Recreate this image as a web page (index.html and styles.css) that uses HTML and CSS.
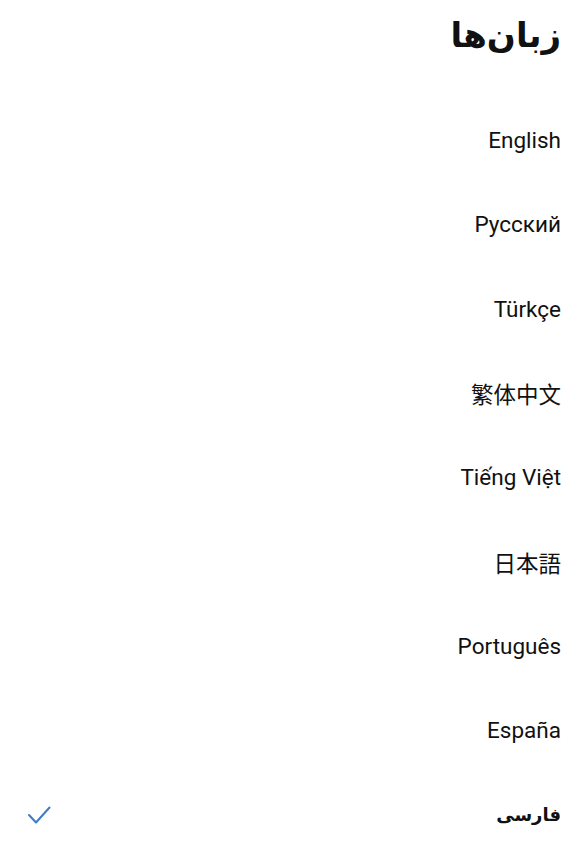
FILE: index.html
```html
<!DOCTYPE html>
<html lang="fa" dir="rtl">
<head>
    <meta charset="UTF-8">
    <title>زبان‌ها</title>
    <link rel="stylesheet" href="styles.css">
</head>
<body>

<div class="page">
    <h1 class="title">زبان‌ها</h1>

    <ul class="lang-list">
        <li class="lang-item" lang="en" dir="ltr">English</li>
        <li class="lang-item" lang="ru" dir="ltr">Русский</li>
        <li class="lang-item" lang="tr" dir="ltr">Türkçe</li>
        <li class="lang-item" lang="zh-Hant" dir="ltr">繁体中文</li>
        <li class="lang-item" lang="vi" dir="ltr">Tiếng Việt</li>
        <li class="lang-item" lang="ja" dir="ltr">日本語</li>
        <li class="lang-item" lang="pt" dir="ltr">Português</li>
        <li class="lang-item" lang="es" dir="ltr">España</li>
        <li class="lang-item active">
            <span class="lang-name">فارسی</span>
            <svg class="check" width="24" height="20" viewBox="0 0 24 20">
                <path d="M2 10 L9 17.5 L22.5 2.5" fill="none" stroke="#3b7cc4" stroke-width="2" stroke-linecap="round" stroke-linejoin="round"/>
            </svg>
        </li>
    </ul>
</div>

</body>
</html>
```

FILE: styles.css
```css
body {
    margin: 0;
    background: #ffffff;
    color: #111111;
    font-family: Roboto, "DejaVu Sans", "Noto Sans CJK SC", sans-serif;
}

.page {
    padding: 0 26px 0 27px;
}

.title {
    margin: 0;
    font-size: 34px;
    line-height: 70px;
    font-weight: bold;
    text-align: right;
    direction: rtl;
}

.lang-list {
    list-style: none;
    margin: 0;
    padding: 28px 0 0 0;
}

.lang-item {
    display: flex;
    align-items: center;
    justify-content: flex-end;
    height: 84.3px;
    font-size: 22.5px;
}

.lang-item.active {
    direction: rtl;
    justify-content: space-between;
    font-weight: bold;
}

.lang-item.active .lang-name {
    font-size: 18px;
}

.lang-item[lang="zh-Hant"] {
    font-family: "Noto Sans CJK TC", sans-serif;
}

.lang-item[lang="ja"] {
    font-family: "Noto Sans CJK JP", sans-serif;
}

.check {
    display: block;
}
```
